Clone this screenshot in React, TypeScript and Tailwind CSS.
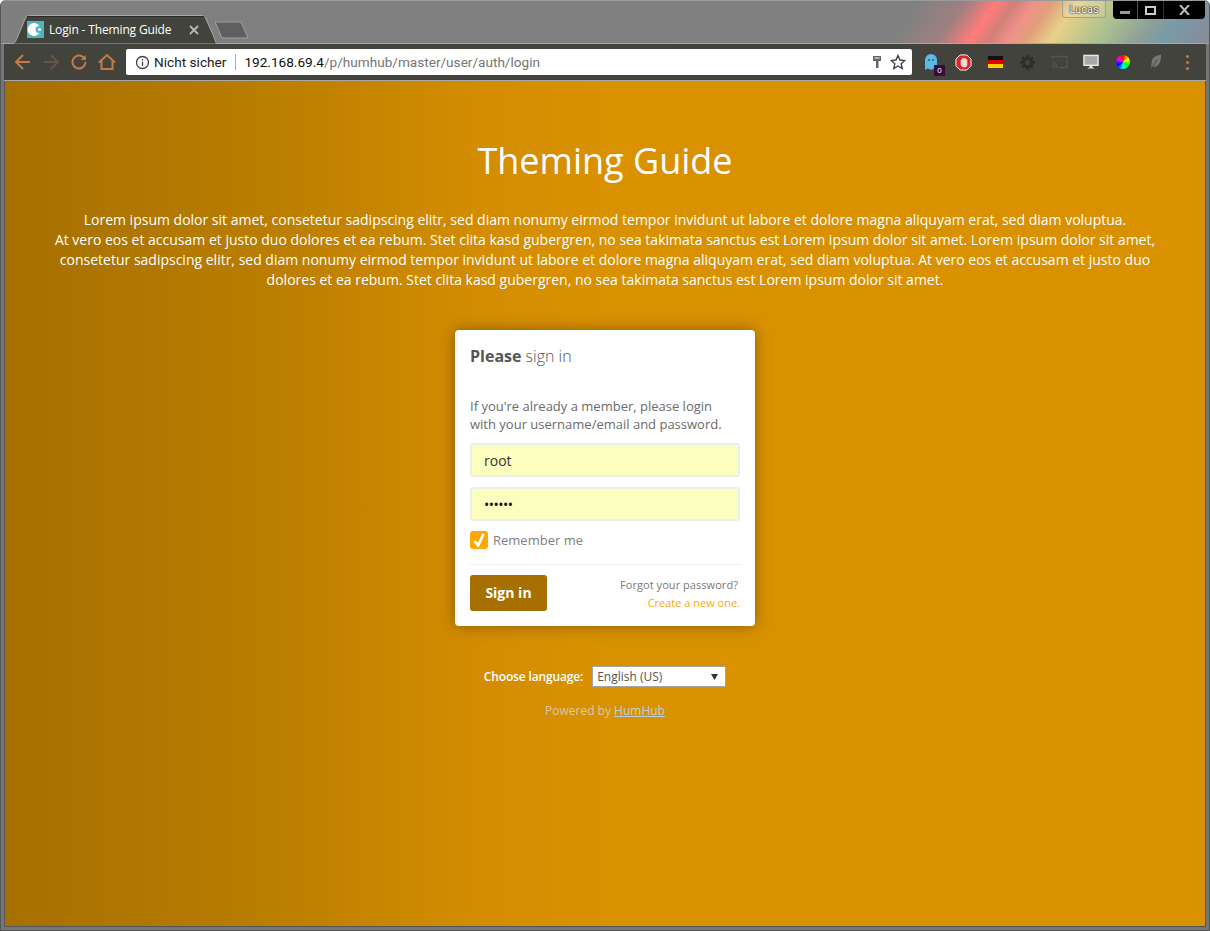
import React from "react";

const sans = "font-['Open_Sans',sans-serif]";
const chrome = "font-['Roboto','Liberation_Sans',sans-serif]";

function NavIcons() {
  return (
    <div className="flex items-center w-[122px] pl-[9px] gap-[8px]">
      <svg width="20" height="20" viewBox="0 0 20 20" fill="none" stroke="#c47a45" strokeWidth="2"><path d="M17 10H3M10 3l-7 7 7 7" /></svg>
      <svg width="20" height="20" viewBox="0 0 20 20" fill="none" stroke="#6a5443" strokeWidth="2"><path d="M3 10h14M10 3l7 7-7 7" /></svg>
      <svg width="20" height="20" viewBox="0 0 20 20" fill="none" stroke="#c47a45" strokeWidth="2"><path d="M16.500 10a6.500 6.500 0 1 1-2-4.700L16 7" /><path d="M16.800 3v5h-5" fill="#c47a45" stroke="none" /></svg>
      <svg width="20" height="20" viewBox="0 0 20 20" fill="none" stroke="#c47a45" strokeWidth="2"><path d="M2 10.500 10 3l8 7.500M4.500 9v8h11V9" /></svg>
    </div>
  );
}

function Slot({ children }: { children: React.ReactNode }) {
  return <div className="relative w-[32px] h-[24px] flex items-center justify-center">{children}</div>;
}

function Extensions() {
  return (
    <div className="flex items-center pl-[3px] text-white">
      <Slot>
        <svg width="14" height="18" viewBox="0 0 14 18"><path d="M1 17V7a6 6 0 0 1 12 0v10l-3-1.500L7 17l-3-1.500z" fill="#5bb8e8" /><circle cx="5" cy="7" r="1" fill="#174" /><circle cx="9" cy="7" r="1" fill="#174" /></svg>
        <span className="absolute left-[19px] top-[15px] w-[11px] h-[11px] bg-[#3a0a3a] text-[8px] leading-[11px] text-center font-['Liberation_Sans',sans-serif]">0</span>
      </Slot>
      <Slot>
        <svg width="17" height="17" viewBox="0 0 18 18"><path d="M5.500 1h7L17 5.500v7L12.500 17h-7L1 12.500v-7z" fill="#dd2222" stroke="#fff" /><path d="M6 12V6.500a1 1 0 0 1 1.500-.5V5a1 1 0 0 1 2 0 1 1 0 0 1 2 .500 1 1 0 0 1 1.500.5V11c0 2-1 3-3 3H8.500C7.500 14 7 13 6 12z" fill="#f4d8d8" /></svg>
      </Slot>
      <Slot>
        <svg width="15" height="12" viewBox="0 0 15 12"><rect width="15" height="4" fill="#111" /><rect y="4" width="15" height="4" fill="#d00" /><rect y="8" width="15" height="4" fill="#fc0" /></svg>
      </Slot>
      <Slot>
        <svg width="15" height="15" viewBox="0 0 16 16"><circle cx="8" cy="8" r="4.500" fill="none" stroke="#2e2e2a" strokeWidth="3.500" /><path d="M8 0v3M8 13v3M0 8h3M13 8h3M2.300 2.300l2 2M11.700 11.700l2 2M2.300 13.700l2-2M11.700 4.300l2-2" stroke="#2e2e2a" strokeWidth="2.500" /></svg>
      </Slot>
      <Slot>
        <svg width="17" height="14" viewBox="0 0 17 14" fill="none" stroke="#555650" strokeWidth="1.300"><path d="M1 4V1.500h15v11H8" /><path d="M1 7a6 6 0 0 1 5 6M1 10a3 3 0 0 1 2.500 3" /></svg>
      </Slot>
      <Slot>
        <svg width="16" height="16" viewBox="0 0 17 16"><rect x="1" y="1" width="15" height="10.500" fill="#a8a8a8" stroke="#e8e8e8" strokeWidth="1.500" /><path d="M7 12h3v2h2v1H5v-1h2z" fill="#e8e8e8" /></svg>
      </Slot>
      <Slot>
        <div className="w-[14px] h-[14px] rounded-full bg-[conic-gradient(#f00,#ff0,#0f0,#0ff,#00f,#f0f,#f00)]" />
      </Slot>
      <Slot>
        <svg width="13" height="18" viewBox="0 0 14 18"><path d="M2 17 3 8c1-4 5-6 10-7 0 6-1 11-6 13l-4 0z" fill="#777" /><path d="M2 17 9 6" stroke="#444" /></svg>
      </Slot>
      <Slot>
        <div className="flex flex-col gap-[3px] items-center">
          <span className="w-[3px] h-[3px] rounded-full bg-[#c47a45]" />
          <span className="w-[3px] h-[3px] rounded-full bg-[#c47a45]" />
          <span className="w-[3px] h-[3px] rounded-full bg-[#c47a45]" />
        </div>
      </Slot>
    </div>
  );
}

export default function App() {
  return (
    <div className={`w-[1210px] h-[931px] overflow-hidden rounded-t-[6px] flex flex-col bg-[#767676] border border-t-0 border-[#555] ${sans}`}>
      {/* Title bar */}
      <div className="relative h-[44px] shrink-0 flex items-end pl-[9px] border-t border-[#9a9a9a] shadow-[inset_0_-1px_0_#a8a8a8] bg-[linear-gradient(125deg,#7f7f7f_0%,#808080_74%,#a08080_78%,#ff7b7a_80.5%,#d08078_82%,#f0908a_83.5%,#e0a07a_85%,#e8d08a_87%,#c8c88a_89%,#a8c090_91%,#8fa098_94%,#7a9aa8_96%,#888a98_100%)]">
        {/* Tab */}
        <div className="relative w-[206px] h-[29px] flex items-center pl-[17px] text-white">
          <svg className="absolute left-0 top-0" width="206" height="29" viewBox="0 0 206 29">
            <path d="M0 29C5 29 6 26 8 21L15 4C16 1 18 .5 20 .5H191C194 .5 195 2 196 4L204 22C205 26 207 29 206 29Z" fill="#43433d" stroke="#a8a8a8" />
            <path d="M17 1.500H194" stroke="#2a2a28" strokeWidth="1" />
          </svg>
          <svg className="relative" width="17" height="17" viewBox="0 0 17 17">
            <rect width="17" height="17" fill="#4fb3c4" />
            <circle cx="7" cy="8.500" r="6.500" fill="#fff" />
            <circle cx="12" cy="8.500" r="3.500" fill="#4fb3c4" />
            <circle cx="12.500" cy="8.500" r="1.500" fill="#fff" />
          </svg>
          <span className={`relative ml-[5px] text-[12px] leading-[16px] tracking-[-0.15px] ${sans}`}>Login - Theming Guide</span>
          <svg className="relative ml-[18px]" width="10" height="10" viewBox="0 0 10 10" stroke="#b8b8b4" strokeWidth="1.800"><path d="M1 1l8 8M9 1l-8 8" /></svg>
        </div>
        {/* New tab */}
        <svg className="ml-[-2px] mb-[5px]" width="36" height="18" viewBox="0 0 36 18">
          <path d="M1 1H27L34 17H8Z" fill="#5f5f5f" stroke="#a0a0a0" />
        </svg>
        {/* Profile + window buttons */}
        <div className="absolute right-[4px] top-0 flex items-start">
          <div className={`w-[44px] h-[17px] mr-[7px] border border-t-0 border-[#a5a08a] rounded-b-[4px] bg-[#ffffff22] text-[11px] leading-[17px] text-center text-white [text-shadow:0_0_1px_#000,0_0_2px_#000] ${chrome}`}>Lucas</div>
          <div className="flex h-[18px] w-[92px] rounded-b-[4px] bg-black">
            <div className="w-[25px] flex items-end justify-center pb-[5px] border-r border-[#555]"><span className="w-[10px] h-[3px] bg-[#999]" /></div>
            <div className="w-[26px] flex items-center justify-center border-r border-[#333]"><span className="w-[11px] h-[9px] border-2 border-[#ccc]" /></div>
            <div className="flex-1 flex items-center justify-center">
              <svg width="11" height="10" viewBox="0 0 11 10" stroke="#bbb" strokeWidth="2"><path d="M1 0l9 10M10 0 1 10" /></svg>
            </div>
          </div>
        </div>
      </div>

      {/* Toolbar */}
      <div className="mx-[3px] h-[36px] shrink-0 flex items-center bg-[#43433d]">
        <NavIcons />
        <div className={`w-[786px] h-[26px] rounded-[2px] bg-white flex items-center pl-[9px] pr-[6px] ${chrome}`}>
          <svg width="15" height="15" viewBox="0 0 15 15" fill="none" stroke="#444" strokeWidth="1.300"><circle cx="7.500" cy="7.500" r="6" /><path d="M7.500 6.500v4.500M7.500 4v1.500" /></svg>
          <span className="ml-[4px] text-[#222] text-[13.650px]">Nicht sicher</span>
          <span className="ml-[9px] mr-[8px] w-px h-[16px] bg-[#aaa]" />
          <span className="text-[13.600px] text-[#111]">192.168.69.4<span className="text-[#767676]">/p/humhub/master/user/auth/login</span></span>
          <div className="ml-auto flex items-center gap-[9px]">
            <svg width="8" height="12" viewBox="0 0 8 12"><path d="M0 0h8v5H5.500v7h-2.500V5H0z" fill="#666" /><path d="M1.500 2h5" stroke="#fff" /></svg>
            <svg width="16" height="16" viewBox="0 0 16 16" fill="none" stroke="#444" strokeWidth="1.400"><path d="m8 1.500 2 4.500 4.800.5-3.600 3.200 1 4.800L8 12l-4.200 2.500 1-4.800L1.200 6.500 6 6z" /></svg>
          </div>
        </div>
        <Extensions />
      </div>
      <div className="mx-[3px] h-px shrink-0 bg-[#a8a8a8]" />

      {/* Page */}
      <div className="flex-1 min-h-0 px-[3px] pb-[3px]">
        <div className="h-full border-b border-x border-[#555] bg-[linear-gradient(90deg,#a67000_0%,#b87c00_20%,#d48d00_40%,#d99100_50%,#d99100_100%)] flex flex-col items-center text-white">
          <h1 className="mt-[53px] text-[36px] leading-[54px] font-normal text-center">Theming Guide</h1>
          <div className="mt-[22px] w-[1120px] text-center text-[14px] leading-[20px] font-medium">
            Lorem ipsum dolor sit amet, consetetur sadipscing elitr, sed diam nonumy eirmod tempor invidunt ut labore et dolore magna aliquyam erat, sed diam voluptua.<br />
            At vero eos et accusam et justo duo dolores et ea rebum. Stet clita kasd gubergren, no sea takimata sanctus est Lorem ipsum dolor sit amet. Lorem ipsum dolor sit amet, consetetur sadipscing elitr, sed diam nonumy eirmod tempor invidunt ut labore et dolore magna aliquyam erat, sed diam voluptua. At vero eos et accusam et justo duo dolores et ea rebum. Stet clita kasd gubergren, no sea takimata sanctus est Lorem ipsum dolor sit amet.
          </div>

          {/* Card */}
          <div className="mt-[40px] w-[300px] h-[296px] rounded-[4px] bg-white shadow-[0_0_15px_rgba(0,0,0,0.35)] px-[15px] pt-[15px] text-[#777]">
            <div className="text-[16px] leading-[22px] text-[#555]">
              <strong className="font-bold">Please</strong> <span className="font-light">sign in</span>
            </div>
            <p className="mt-[30px] text-[13px] leading-[18px] text-[#6b6b6b]">
              If you're already a member, please login<br />with your username/email and password.
            </p>
            <div className="mt-[10px] h-[34px] rounded-[3px] border-2 border-[#ededed] bg-[#fbfebd] pl-[12px] flex items-center text-[14px] text-[#333]">root</div>
            <div className="mt-[10px] h-[34px] rounded-[3px] border-2 border-[#ededed] bg-[#fbfebd] pl-[12px] flex items-center text-[14px] text-[#111] tracking-[-0.5px]">••••••</div>
            <div className="mt-[10px] flex items-center">
              <span className="w-[18px] h-[18px] rounded-[3px] bg-[#ffa900] flex items-center justify-center">
                <svg width="12" height="14" viewBox="0 0 12 14" fill="none" stroke="#fff" strokeWidth="2.800"><path d="M1.500 8 5 12.500 10.500 1" /></svg>
              </span>
              <span className="ml-[5px] text-[13px] leading-[18px] text-[#808080]">Remember me</span>
            </div>
            <div className="mt-[15px] h-px bg-[#eeeeee]" />
            <div className="mt-[10px] flex justify-between">
              <div className="w-[77px] h-[36px] rounded-[3px] bg-[#a66f00] text-white text-[14px] font-bold flex items-center justify-center pb-px">Sign in</div>
              <div className="pt-px text-right text-[11px] leading-[18px]">
                <div className="pr-[2px] text-[#7a7a7a] tracking-[0.05px]">Forgot your password?</div>
                <div className="text-[#ffa900]">Create a new one.</div>
              </div>
            </div>
          </div>

          {/* Language */}
          <div className="mt-[40px] flex items-center">
            <span className="text-[12px] leading-[21px] font-semibold tracking-[-0.15px]">Choose language:</span>
            <div className="ml-[9px] w-[134px] h-[21px] border border-[#a5a5a5] bg-white text-[#555] text-[12px] flex items-center pl-[4px] pr-[7px] justify-between">
              English (US)
              <svg width="7" height="7" viewBox="0 0 7 7"><path d="M0 1h7L3.500 7z" fill="#333" /></svg>
            </div>
          </div>
          <div className="mt-[15px] text-[12px] leading-[18px] text-[#d5c9a8]">
            Powered by <span className="underline text-[#bcd0dc]">HumHub</span>
          </div>
        </div>
      </div>
    </div>
  );
}
